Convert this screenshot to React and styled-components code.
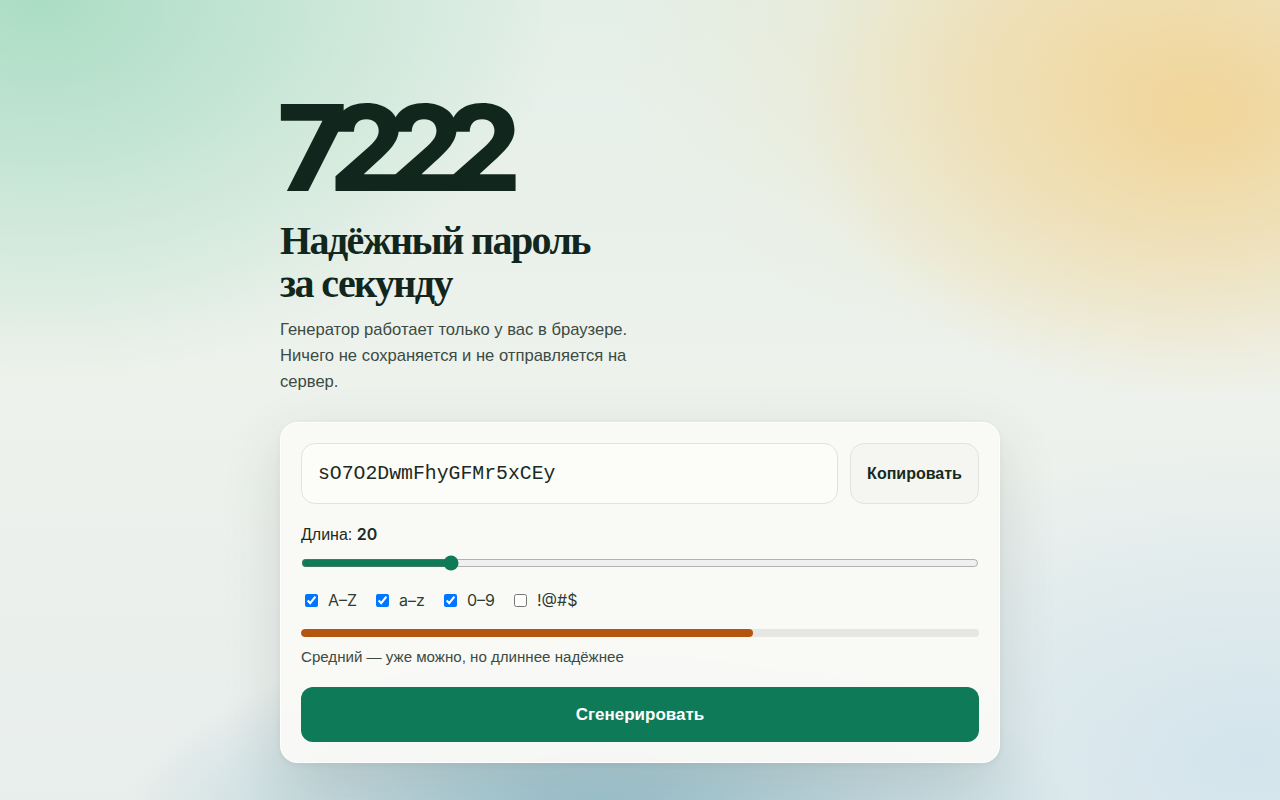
import React, { useState } from "react";
import styled, { createGlobalStyle } from "styled-components";

const Global = createGlobalStyle`
  html, body { margin: 0; padding: 0; }
  body {
    min-height: 800px;
    font-family: "Liberation Sans", Arial, sans-serif;
    color: #12261c;
    background: #eef2ee;
  }
  * { box-sizing: border-box; }
`;

const Page = styled.div`
  min-height: 800px;
  width: 100%;
  overflow: hidden;
  background:
    radial-gradient(ellipse 400px 290px at 1200px 110px, rgba(242, 212, 150, 0.95), rgba(242, 212, 150, 0) 100%),
    radial-gradient(ellipse 480px 320px at 1100px 40px, rgba(240, 228, 190, 0.75), rgba(240, 228, 190, 0) 100%),
    radial-gradient(ellipse 520px 380px at 40px 0px, rgba(168, 220, 194, 0.95), rgba(168, 220, 194, 0) 100%),
    radial-gradient(ellipse 480px 200px at 600px 830px, rgba(145, 188, 202, 1), rgba(145, 188, 202, 0) 100%),
    radial-gradient(ellipse 500px 320px at 1250px 760px, rgba(210, 228, 236, 0.95), rgba(210, 228, 236, 0) 100%),
    linear-gradient(180deg, #e4efe8 0%, #eef2ec 50%, #e8eeec 100%);
  display: flex;
  justify-content: center;
`;

const Column = styled.main`
  width: 720px;
  padding-top: 88px;
  display: flex;
  flex-direction: column;
`;

const BigNumber = styled.div`
  font-family: Inter, "Liberation Sans", sans-serif;
  font-weight: 800;
  font-size: 120px;
  line-height: 1;
  letter-spacing: -0.155em;
  color: #11261c;
  margin-left: -3px;
`;

const Title = styled.h1`
  margin: 11px 0 0;
  font-family: "Liberation Serif", "Times New Roman", serif;
  font-weight: 700;
  font-size: 40px;
  line-height: 43px;
  letter-spacing: -0.04em;
  color: #11261c;
`;

const Lead = styled.p`
  margin: 12px 0 0;
  max-width: 360px;
  font-size: 16.6px;
  line-height: 26px;
  color: #3b4b43;
`;

const Card = styled.section`
  margin-top: 27px;
  width: 720px;
  padding: 20px;
  border-radius: 18px;
  background: rgba(250, 250, 246, 0.94);
  border: 1px solid rgba(255, 255, 255, 0.9);
  box-shadow: 0 20px 60px rgba(40, 60, 50, 0.14), 0 2px 6px rgba(40, 60, 50, 0.06);
  display: flex;
  flex-direction: column;
`;

const OutputRow = styled.div`
  display: flex;
  gap: 12px;
`;

const PasswordField = styled.input`
  flex: 1;
  height: 61px;
  padding: 0 16px;
  border-radius: 14px;
  border: 1px solid #e1e3dd;
  background: #fcfcf8;
  font-family: "Liberation Mono", "Courier New", monospace;
  font-size: 19.8px;
  color: #1b2a22;
  outline: none;
`;

const CopyButton = styled.button`
  width: 129px;
  height: 61px;
  border-radius: 14px;
  border: 1px solid #e1e3dd;
  background: #f5f6f2;
  font-family: "Liberation Sans", Arial, sans-serif;
  font-weight: 700;
  font-size: 16px;
  color: #152a20;
  cursor: pointer;
`;

const LengthLabel = styled.label`
  margin-top: 20px;
  font-size: 16px;
  line-height: 20px;
  color: #1d2b24;
`;

const LengthValue = styled.b`
  font-family: Inter, "Liberation Sans", sans-serif;
  font-weight: 600;
`;

const Range = styled.input`
  margin: 10px 0 0;
  width: 100%;
  accent-color: #0f7a57;
`;

const Options = styled.div`
  margin-top: 19px;
  display: flex;
  gap: 15px;
  align-items: center;
`;

const Option = styled.label`
  display: flex;
  align-items: center;
  gap: 7px;
  font-family: Inter, "Liberation Sans", sans-serif;
  font-size: 16px;
  line-height: 20px;
  color: #2f3d35;
  padding-left: 1px;

  input { margin: 0 3px; width: 13px; height: 13px; }
`;

const Meter = styled.div`
  margin-top: 19px;
  height: 8px;
  border-radius: 4px;
  background: #e6e7e3;
  overflow: hidden;
`;

const MeterFill = styled.div`
  height: 100%;
  border-radius: 4px;
  background: #b4560f;
`;

const Verdict = styled.div`
  margin-top: 10px;
  font-size: 15.1px;
  line-height: 20px;
  color: #3b4b43;
`;

const GenerateButton = styled.button`
  margin-top: 20px;
  height: 55px;
  border: none;
  border-radius: 12px;
  background: #0f7a57;
  color: #ffffff;
  font-family: "Liberation Sans", Arial, sans-serif;
  font-weight: 700;
  font-size: 17px;
  cursor: pointer;
`;

export default function App() {
  const [length, setLength] = useState(20);
  const [opts, setOpts] = useState({ upper: true, lower: true, digits: true, symbols: false });
  const toggle = (k) => setOpts((o) => ({ ...o, [k]: !o[k] }));
  const options = [
    ["upper", "A–Z"],
    ["lower", "a–z"],
    ["digits", "0–9"],
    ["symbols", "!@#$"],
  ];
  return (
    <>
      <Global />
      <Page>
        <Column>
          <BigNumber>7222</BigNumber>
          <Title>
            Надёжный пароль
            <br />
            за секунду
          </Title>
          <Lead>
            Генератор работает только у вас в браузере. Ничего не сохраняется и не отправляется на сервер.
          </Lead>
          <Card>
            <OutputRow>
              <PasswordField readOnly value="sO7O2DwmFhyGFMr5xCEy" />
              <CopyButton>Копировать</CopyButton>
            </OutputRow>
            <LengthLabel>
              Длина: <LengthValue>{length}</LengthValue>
            </LengthLabel>
            <Range
              type="range"
              min={8}
              max={64}
              value={length}
              onChange={(e) => setLength(Number(e.target.value))}
            />
            <Options>
              {options.map(([k, t]) => (
                <Option key={k}>
                  <input type="checkbox" checked={opts[k]} onChange={() => toggle(k)} />
                  {t}
                </Option>
              ))}
            </Options>
            <Meter>
              <MeterFill style={{ width: "66.7%" }} />
            </Meter>
            <Verdict>Средний — уже можно, но длиннее надёжнее</Verdict>
            <GenerateButton>Сгенерировать</GenerateButton>
          </Card>
        </Column>
      </Page>
    </>
  );
}
